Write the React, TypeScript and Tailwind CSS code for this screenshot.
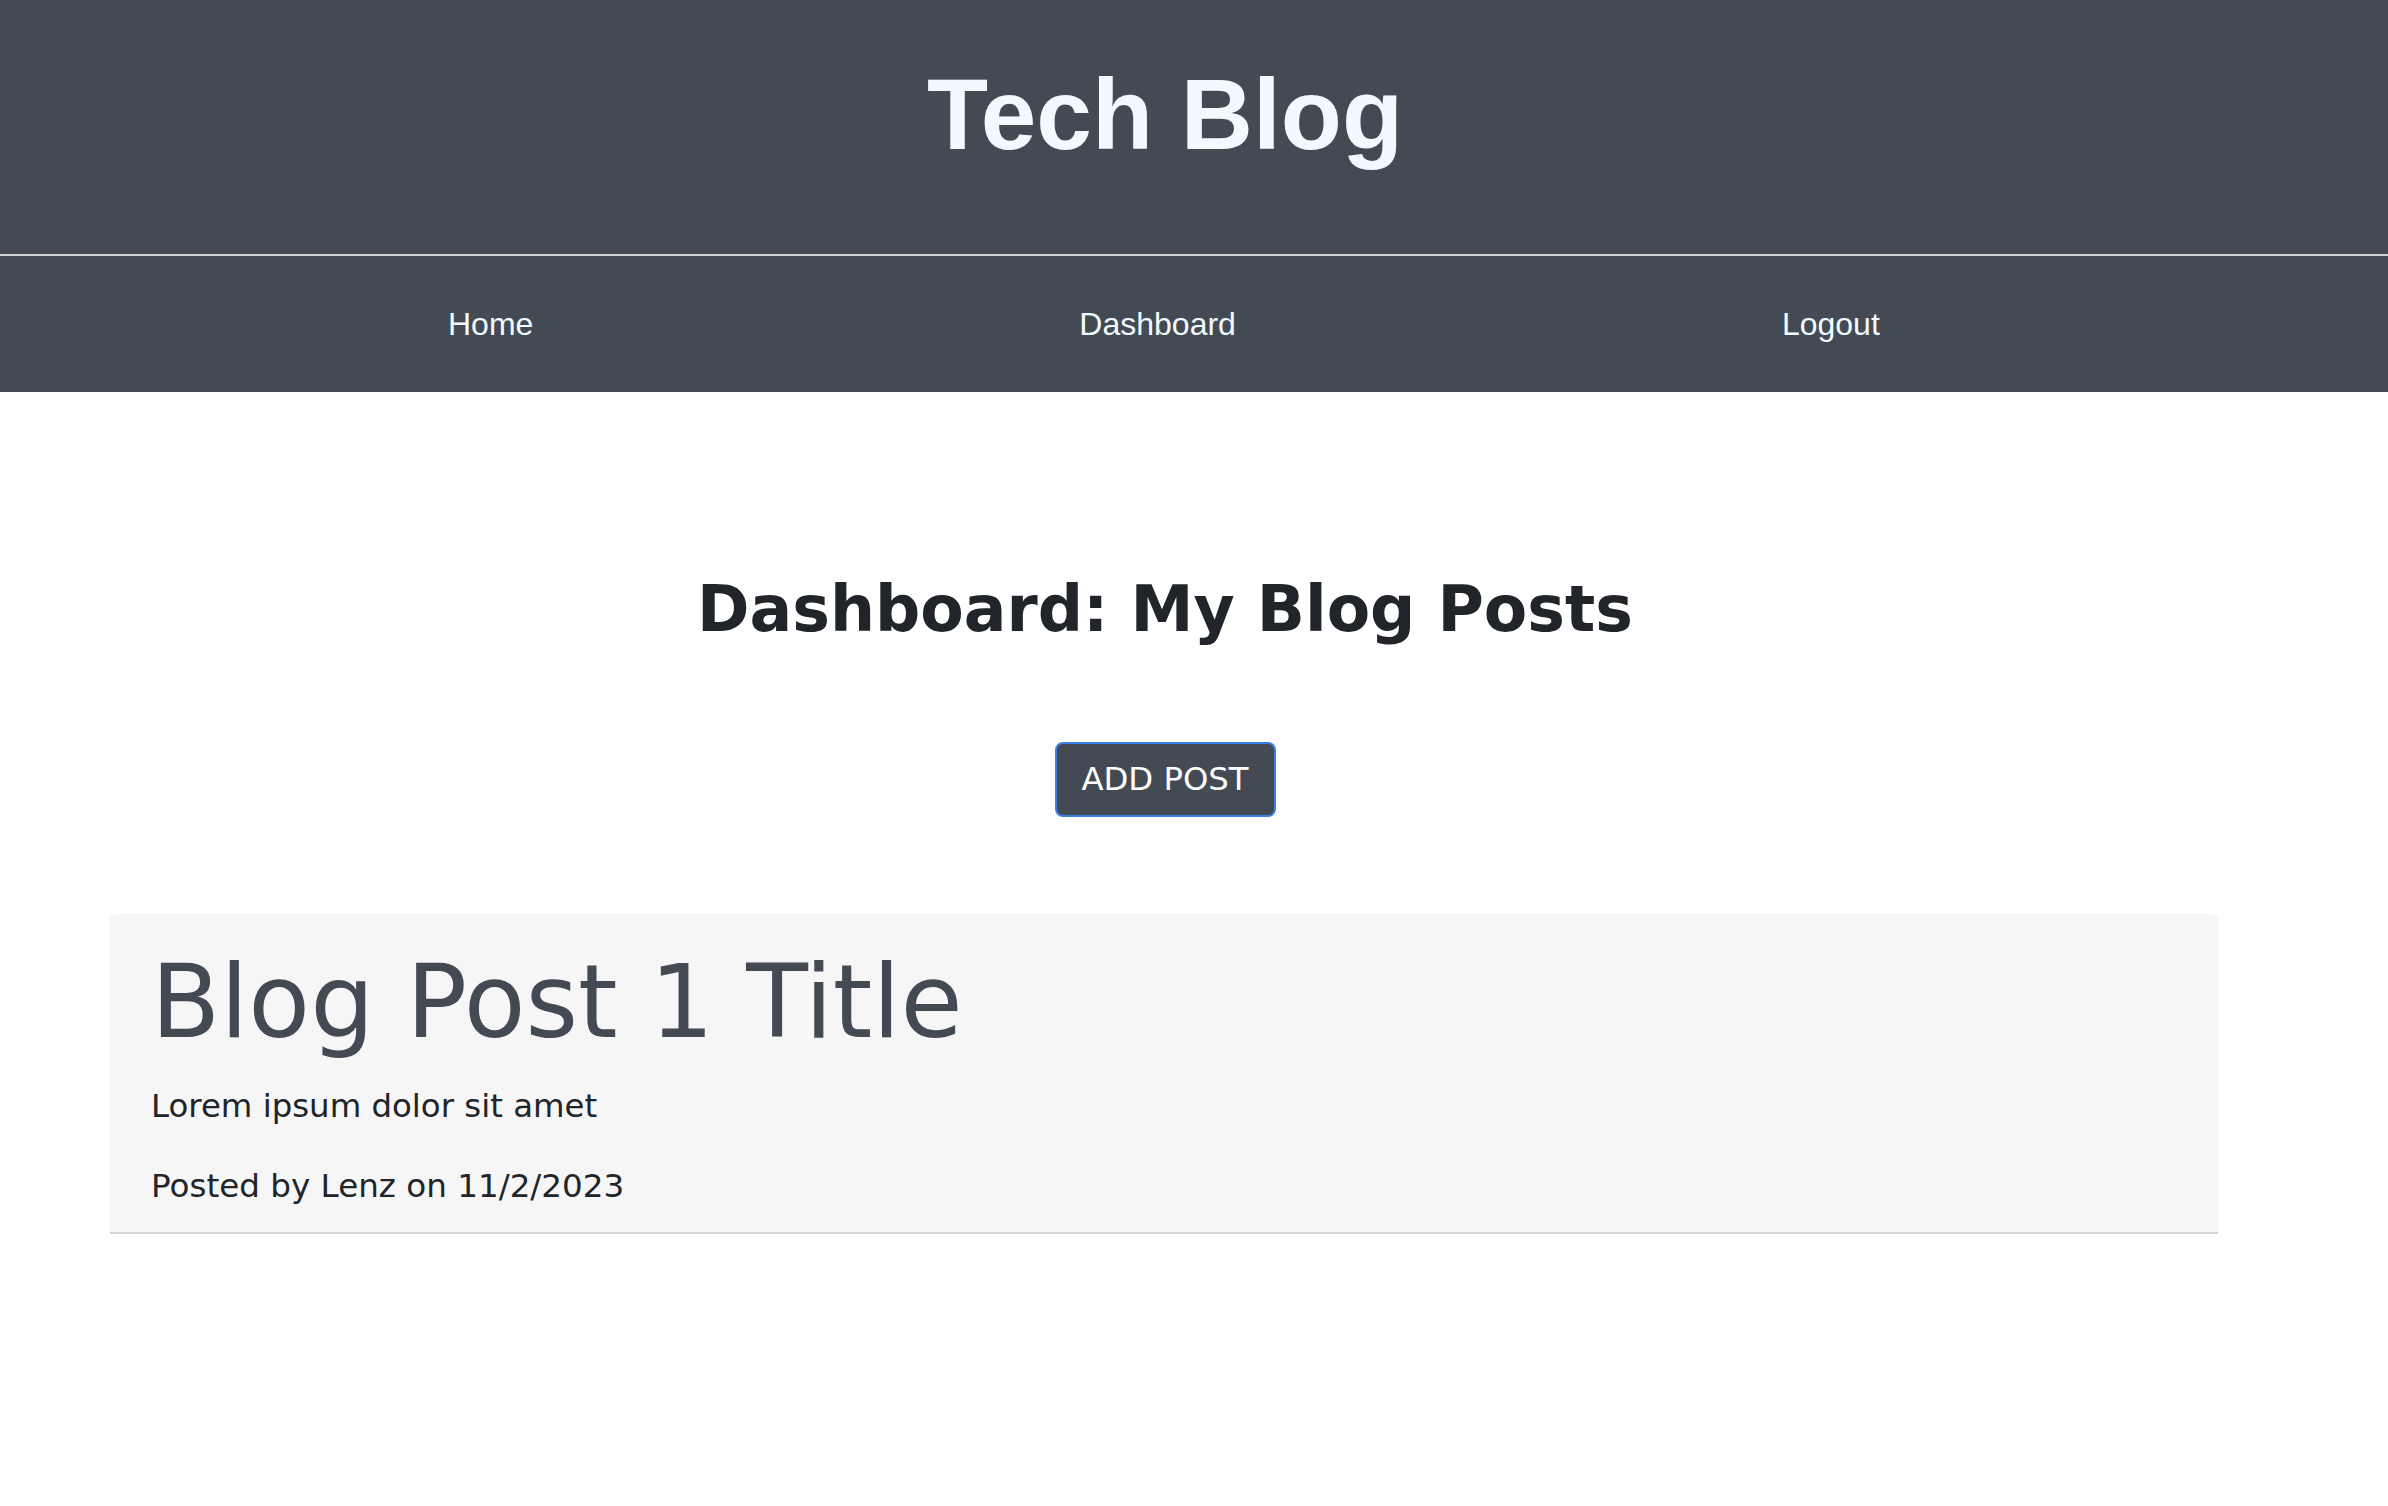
import React from "react";

export default function App() {
  return (
    <div className="min-h-[1506px] bg-white font-['DejaVu_Sans',Verdana,sans-serif]">
      <header className="bg-[#434a54]">
        <div className="flex h-[254px] w-[2330px] justify-center pt-[57px]">
          <h1 className="font-['Liberation_Sans',Arial,sans-serif] text-[100px] font-bold leading-[115px] text-[#f0faff]">
            Tech Blog
          </h1>
        </div>
        <div className="h-[2px] bg-[#cfd0d2]" />
        <nav className="flex h-[136px] items-center gap-[546px] pl-[448px] font-['Liberation_Sans',Arial,sans-serif] text-[32px] leading-[37px] text-[#f0faff]">
          <a href="#">Home</a>
          <a href="#">Dashboard</a>
          <a href="#">Logout</a>
        </nav>
      </header>

      <main className="flex w-[2330px] flex-col items-center pt-[180px]">
        <h2 className="text-[63.3px] font-bold leading-[75px] text-[#212529]">
          Dashboard: My Blog Posts
        </h2>
        <button className="mt-[95px] flex h-[75px] w-[221px] items-center justify-center rounded-[8px] border-2 border-[#3a80e8] bg-[#434a54] text-[32.3px] leading-[37px] text-white">
          ADD POST
        </button>

        <section className="mt-[97px] ml-[110px] w-[2108px] self-start rounded-t-[6px] border-b-2 border-[#d6d6d6] bg-[#f6f6f6] px-[41px] pt-[29px] pb-[27px]">
          <h3 className="text-[101px] leading-[119px] text-[#434a54]">Blog Post 1 Title</h3>
          <p className="mt-[26px] text-[32.4px] leading-[37px] text-[#212529]">Lorem ipsum dolor sit amet</p>
          <p className="mt-[43px] text-[32.6px] leading-[37px] text-[#212529]">Posted by Lenz on 11/2/2023</p>
        </section>
      </main>
    </div>
  );
}
